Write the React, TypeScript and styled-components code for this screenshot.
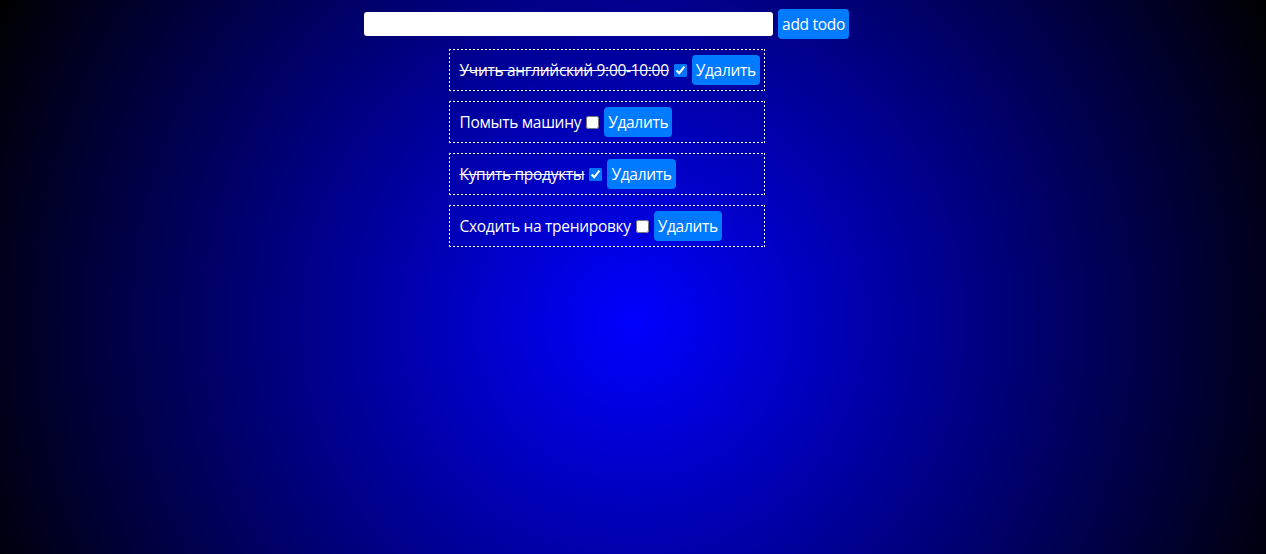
import React, { useState } from "react";
import styled, { createGlobalStyle } from "styled-components";

const GlobalStyle = createGlobalStyle`
  html, body {
    margin: 0;
    padding: 0;
    min-height: 100vh;
  }
  body {
    background: radial-gradient(circle farthest-corner at 50% 58%, #0000ff 0%, #000000 100%);
    background-attachment: fixed;
    font-family: "Open Sans", "Noto Sans", sans-serif;
    font-size: 15.5px;
    letter-spacing: -0.3px;
    color: #ffffff;
  }
`;

const Page = styled.div`
  display: flex;
  flex-direction: column;
  align-items: center;
  padding: 9px 53px 0 0;
  gap: 10px;
`;

const Form = styled.form`
  display: flex;
  align-items: center;
  gap: 5px;
`;

const TextInput = styled.input`
  width: 409px;
  height: 24px;
  box-sizing: border-box;
  border: none;
  border-radius: 3px;
  background: #ffffff;
  padding: 0 6px;
  font: inherit;
  outline: none;
`;

const Button = styled.button`
  height: 30px;
  padding: 0 4px;
  border: none;
  border-radius: 4px;
  background: #007bff;
  color: #ffffff;
  font-family: inherit;
  font-size: 15.5px;
  letter-spacing: -0.3px;
  cursor: pointer;
`;

const List = styled.ul`
  list-style: none;
  margin: 0;
  padding: 0;
  display: flex;
  flex-direction: column;
  gap: 10px;
`;

const dashH = "repeating-linear-gradient(90deg, #ffffff 0 2px, transparent 2px 4px)";
const dashV = "repeating-linear-gradient(180deg, #ffffff 0 2px, transparent 2px 4px)";

const Item = styled.li`
  width: 316px;
  height: 42px;
  box-sizing: border-box;
  padding: 6px 11px;
  display: flex;
  align-items: center;
  background:
    ${dashH} left top / 100% 1px no-repeat,
    ${dashH} left bottom / 100% 1px no-repeat,
    ${dashV} left top / 1px 100% no-repeat,
    ${dashV} right top / 1px 100% no-repeat;
`;

const Title = styled.span<{ $done: boolean }>`
  text-decoration: ${(p) => (p.$done ? "line-through" : "none")};
  white-space: nowrap;
`;

const Check = styled.input`
  width: 13px;
  height: 13px;
  margin: 0 5px;
`;

type Todo = { id: number; title: string; done: boolean };

export default function App() {
  const [text, setText] = useState("");
  const [todos, setTodos] = useState<Todo[]>([
    { id: 1, title: "Учить английский 9:00-10:00", done: true },
    { id: 2, title: "Помыть машину", done: false },
    { id: 3, title: "Купить продукты", done: true },
    { id: 4, title: "Сходить на тренировку", done: false },
  ]);

  const add = (e: React.FormEvent) => {
    e.preventDefault();
    if (!text.trim()) return;
    setTodos([...todos, { id: Date.now(), title: text, done: false }]);
    setText("");
  };

  return (
    <>
      <GlobalStyle />
      <Page>
        <Form onSubmit={add}>
          <TextInput value={text} onChange={(e) => setText(e.target.value)} />
          <Button type="submit">add todo</Button>
        </Form>
        <List>
          {todos.map((t) => (
            <Item key={t.id}>
              <Title $done={t.done}>{t.title}</Title>
              <Check
                type="checkbox"
                checked={t.done}
                onChange={() =>
                  setTodos(todos.map((x) => (x.id === t.id ? { ...x, done: !x.done } : x)))
                }
              />
              <Button onClick={() => setTodos(todos.filter((x) => x.id !== t.id))}>Удалить</Button>
            </Item>
          ))}
        </List>
      </Page>
    </>
  );
}
